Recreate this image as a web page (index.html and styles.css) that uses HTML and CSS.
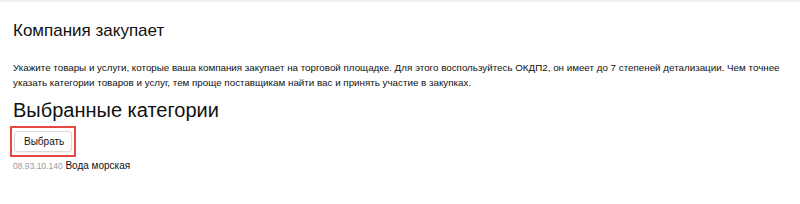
FILE: index.html
```html
<!DOCTYPE html>
<html lang="ru">
<head>
<meta charset="utf-8">
<link rel="stylesheet" href="styles.css">
</head>
<body>
<div class="topline"></div>
<main class="page">
  <h2 class="title">Компания закупает</h2>
  <p class="desc">Укажите товары и услуги, которые ваша компания закупает на торговой площадке. Для этого воспользуйтесь ОКДП2, он имеет до 7 степеней детализации. Чем точнее указать категории товаров и услуг, тем проще поставщикам найти вас и принять участие в закупках.</p>
  <h1 class="subtitle">Выбранные категории</h1>
  <div class="highlight">
    <button class="btn" type="button">Выбрать</button>
  </div>
  <div class="item"><span class="code">08.93.10.140</span> <span class="name">Вода морская</span></div>
</main>
</body>
</html>
```
FILE: styles.css
```css
html, body { margin: 0; padding: 0; background: #fff; }
body { font-family: "Liberation Sans", Arial, sans-serif; color: #111; }
.topline { height: 2px; background: #f0f0f0; }
.page { padding: 0 8px 0 13px; }
.title { font-size: 17px; font-weight: normal; margin: 19px 0 0; line-height: 20px; }
.desc { font-size: 9.8px; line-height: 15px; margin: 19px 0 0; }
.subtitle { font-size: 20px; font-weight: normal; margin: 8px 0 0; line-height: 24px; }
.highlight { display: inline-block; vertical-align: top; border: 2px solid #e8473f; padding: 3px 2px; margin: 4px 0 0 -3px; }
.btn { display: block; font-family: inherit; font-size: 10px; color: #111; background: #fff; border: 1px solid #d9d9d9; border-radius: 3px; padding: 0 9px; height: 21px; width: 58px; box-shadow: 0 1px 1px rgba(0,0,0,0.06); }
.item { margin-top: 3px; font-size: 10px; line-height: 12px; }
.code { color: #9a9a9a; font-size: 8.5px; }
```
